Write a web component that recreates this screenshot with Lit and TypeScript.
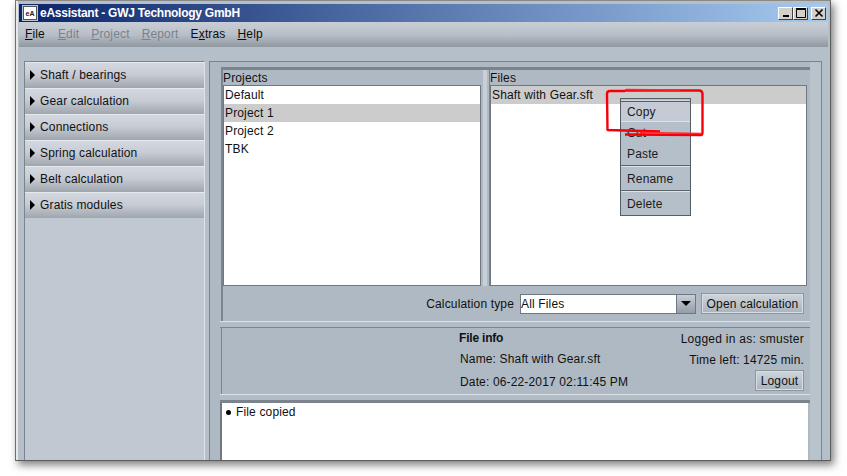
import { LitElement, html, css, svg } from "lit";
import { customElement } from "lit/decorators.js";

@customElement("app-root")
export class AppRoot extends LitElement {
  static styles = css`
    :host { display: block; width: 847px; height: 476px; background: #fff; overflow: hidden; position: relative;
      font-family: "Liberation Sans", Arial, sans-serif; font-size: 12px; color: #111; letter-spacing: 0.15px; }
    .win { position: absolute; left: 15px; top: 0; width: 816px; height: 461px; box-sizing: border-box;
      background: #b4bfc9; border: 1px solid #6e6e6e; border-top-color: #8a8a8a; border-right-color:#5c5c5c; border-bottom-color:#5c5c5c;
      box-shadow: 3px 4px 8px rgba(0,0,0,.5); display: flex; flex-direction: column; padding: 3px 2px 0 0; }
    .win::before { content:""; position:absolute; left:0; top:0; bottom:0; width:2px; background:#e8e8e4; }
    .title { height: 18px; flex: none; margin-left: 3px; background: linear-gradient(90deg, #0a246a, #a6caf0);
      display: flex; align-items: center; color: #fff; font-weight: bold; font-size: 12px; letter-spacing: -0.25px; padding: 0 2px 0 4px; box-sizing:border-box; }
    .appicon { width: 14px; height: 14px; margin-right: 3px; background: #fff; border: 1px solid #555; box-sizing: border-box; color: #222; font: bold 7px "Liberation Sans"; letter-spacing: 0; display: flex; align-items: center; justify-content: center; outline:1px solid #b9c4d6; }
    .grow { flex: 1; }
    .wbtn { width: 15px; height: 13px; background: #d4d0c8; box-sizing: border-box; border: 1px solid; border-color: #fff #404040 #404040 #fff; display: flex; align-items: center; justify-content: center; }
    .wbtn.last { margin-left: 3px; }
    .menu { height: 24px; flex: none; margin-left: 3px; background: linear-gradient(#c9ced6 0%, #b9bfc8 50%, #8f979f 100%); display: flex; align-items: center; gap: 12px; padding: 0 0 1px 6px; color: #0c0c0c; }
    .menu span:first-child { margin-right: 1px; }
    .menu u { text-decoration: underline; }
    .menu .off { color: #7a828a; }
    .body { flex: 1; min-height: 0; display: flex; padding: 14px 0 0 8px; gap: 4px; align-items: stretch; }
    .left { width: 181px; flex: none; box-sizing: border-box; border: 1px solid #7b848c; border-bottom: 0; border-right: 1px solid #dfe4e9; background: #c0c8d1; }
    .acc { height: 26px; box-sizing: border-box; border-top: 1px solid #e6e9ee; background: linear-gradient(#d3d7e0, #c7ccd5 45%, #a0a6ae); display: flex; align-items: center; padding: 0 0 1px 5px; gap: 5px; color: #111; }
    .tri { width: 0; height: 0; border-left: 5px solid #000; border-top: 5px solid transparent; border-bottom: 5px solid transparent; }
    .right { flex: 1; box-sizing: border-box; border: 1px solid #7b848c; border-bottom: 0; padding: 5px 11px 0 11px; background: #aeb9c3; box-shadow: inset -11px 0 0 #b9c3cc; margin-right: 6px; display: flex; flex-direction: column; }
    .top { flex: none; border-top: 3px solid #7b848c; border-left: 2px solid #7b848c; }
    .lists { display: flex; height: 216px; }
    .col { display: flex; flex-direction: column; }
    .col.p { width: 258px; }
    .col.f { flex: 1; margin-right: 3px; }
    .split { width: 9px; background: linear-gradient(90deg, #aeb9c3 0 2px, #c8cfd6 2px 6px, #aeb9c3 6px 8px, #7b848c 8px); }
    .hd { height: 15px; line-height: 17px; flex: none; border-bottom: 1px solid #6f7880; color: #111; }
    .list { flex: 1; background: #fff; border-left: 1px solid #6f7880; border-right: 1px solid #6f7880; border-bottom: 1px solid #6f7880; }
    .row { height: 18px; line-height: 18px; padding-left: 1px; }
    .row.sel { background: #cccccc; }
    .calc { height: 35px; display: flex; align-items: center; justify-content: flex-end; padding-right: 6px; box-sizing:border-box; }
    .calc .lab { margin-right: 6px; }
    .combo { width: 176px; height: 20px; box-sizing: border-box; border: 1px solid #6f7880; background: #fff; display: flex; align-items: stretch; margin-right: 5px; }
    .combo .val { flex: 1; line-height: 19px; }
    .combo .arr { width: 18px; background: linear-gradient(#c8ced6, #959ca5); border-left: 1px solid #6f7880; display: flex; align-items: center; justify-content: center; }
    .down { width: 0; height: 0; border-top: 5px solid #000; border-left: 5px solid transparent; border-right: 5px solid transparent; }
    .btn { box-sizing: border-box; height: 21px; border: 1px solid #8d959d; outline: 1px solid #d7dde3; outline-offset: -2px; background: linear-gradient(#cfd5dc, #aab2bb); display: flex; align-items: center; justify-content: center; color: #111; }
    .btn.open { width: 103px; }
    .btn.logout { width: 49px; }
    .sep1 { height: 7px; flex: none; background: #b2bcc6; border-top: 1px solid #dde3e8; border-bottom: 1px solid #7b848c; margin-left: -1px; box-sizing: border-box; }
    .info { height: 66px; flex: none; box-sizing: border-box; display: grid; grid-template-columns: 1fr auto; padding: 0 6px 0 238px; border-left: 1px solid #7b848c; }
    .info .c { display: flex; flex-direction: column; }
    .info .c div { height: 21px; line-height: 21px; }
    .info .c div.last { height: 24px; line-height: 24px; }
    .info .r { display: flex; flex-direction: column; align-items: flex-end; }
    .info .r div.t { height: 21px; line-height: 22px; }
    .info .r div.wide { letter-spacing: 0.25px; }
    .info .c div.b { font-weight: bold; letter-spacing: -0.2px; margin-left: -1px; }
    .sep2 { height: 9px; flex: none; background: #b2bcc6; border-top: 1px solid #dde3e8; border-bottom: 3px solid #7b848c; margin-left: -1px; box-sizing: border-box; }
    .log { flex: 1; background: #fff; margin-left: -1px; margin-right: 2px; border-left: 2px solid #6f7880; padding: 2px 0 0 4px; display: flex; gap: 5px; align-items: flex-start; line-height: 15px; min-height: 0; }
    .dot { width: 5px; height: 5px; background: #000; border-radius: 50%; margin-top: 5px; }
    .popup { position: absolute; left: 620px; top: 98px; width: 71px; height: 118px; box-sizing: border-box; background: #b5bfca; border: 1px solid #555d65; color: #1a1a1a; padding-top: 2px; }
    .popup::before { content: ""; position: absolute; left: 0; right: 0; top: 1px; height: 1px; background: #cfd5dc; }
    .pi { padding-left: 6px; box-sizing: border-box; }
    .pi.hot { background: #c4cbd5; border-top: 1px solid #555d65; border-bottom: 1px solid #dfe3e8; height: 21px; line-height: 21px; }
    .pi.two { height: 20px; line-height: 22px; }
    .pi.pa { height: 24px; line-height: 24px; border-bottom: 1px solid #5b636b; }
    .pi.re { height: 25px; line-height: 25px; border-top: 1px solid #dfe3e8; border-bottom: 1px solid #5b636b; }
    .pi.de { height: 24px; line-height: 25px; border-top: 1px solid #dfe3e8; }
    .scrawl { position: absolute; left: 0; top: 0; pointer-events: none; }
  `;

  render() {
    const items = ["Shaft / bearings", "Gear calculation", "Connections", "Spring calculation", "Belt calculation", "Gratis modules"];
    return html`
      <div class="win">
        <div class="title">
          <div class="appicon">eA</div><span>eAssistant - GWJ Technology GmbH</span><div class="grow"></div>
          <div class="wbtn"><svg width="10" height="10"><rect x="2" y="7" width="6" height="2" fill="#000"/></svg></div>
          <div class="wbtn"><svg width="10" height="10"><path d="M.5 1.5h9v8h-9z M0 .5h10" fill="none" stroke="#000"/></svg></div>
          <div class="wbtn last"><svg width="10" height="10"><path d="M1.5 1.5l7 7M8.5 1.5l-7 7" stroke="#000" stroke-width="1.6"/></svg></div>
        </div>
        <div class="menu">
          <span><u>F</u>ile</span><span class="off"><u>E</u>dit</span><span class="off"><u>P</u>roject</span><span class="off"><u>R</u>eport</span><span>E<u>x</u>tras</span><span><u>H</u>elp</span>
        </div>
        <div class="body">
          <div class="left">
            ${items.map((t) => html`<div class="acc"><span class="tri"></span><span>${t}</span></div>`)}
          </div>
          <div class="right">
            <div class="top">
              <div class="lists">
                <div class="col p"><div class="hd">Projects</div>
                  <div class="list">
                    <div class="row">Default</div><div class="row sel">Project 1</div><div class="row">Project 2</div><div class="row">TBK</div>
                  </div>
                </div>
                <div class="split"></div>
                <div class="col f"><div class="hd">Files</div>
                  <div class="list"><div class="row sel">Shaft with Gear.sft</div></div>
                </div>
              </div>
              <div class="calc">
                <span class="lab">Calculation type</span>
                <div class="combo"><div class="val">All Files</div><div class="arr"><span class="down"></span></div></div>
                <div class="btn open">Open calculation</div>
              </div>
            </div>
            <div class="sep1"></div>
            <div class="info">
              <div class="c"><div class="b">File info</div><div>Name: Shaft with Gear.sft</div><div class="last">Date: 06-22-2017 02:11:45 PM</div></div>
              <div class="r"><div class="t wide">Logged in as: smuster</div><div class="t">Time left: 14725 min.</div><div class="btn logout">Logout</div></div>
            </div>
            <div class="sep2"></div>
            <div class="log"><span class="dot"></span><span>File copied</span></div>
          </div>
        </div>
      </div>
      <div class="popup">
        <div class="pi hot">Copy</div><div class="pi two">Cut</div><div class="pi pa">Paste</div><div class="pi re">Rename</div><div class="pi de">Delete</div>
      </div>
      <svg class="scrawl" width="847" height="476">
        ${svg`<path d="M625 91 L610 91 Q607 91 607 94 L607.5 130 L660 131.5 M625 134.5 L701 135 Q702.5 135 702.5 132 L702.5 94 Q702.5 90.5 699 90.5 L625 90.5" fill="none" stroke="#f5000a" stroke-width="2.4" stroke-linejoin="round"/>
        <path d="M626 89.5 L680 90 M640 132.5 L702 133.5" fill="none" stroke="#ff2a30" stroke-width="1.6"/>`}
      </svg>
    `;
  }
}
